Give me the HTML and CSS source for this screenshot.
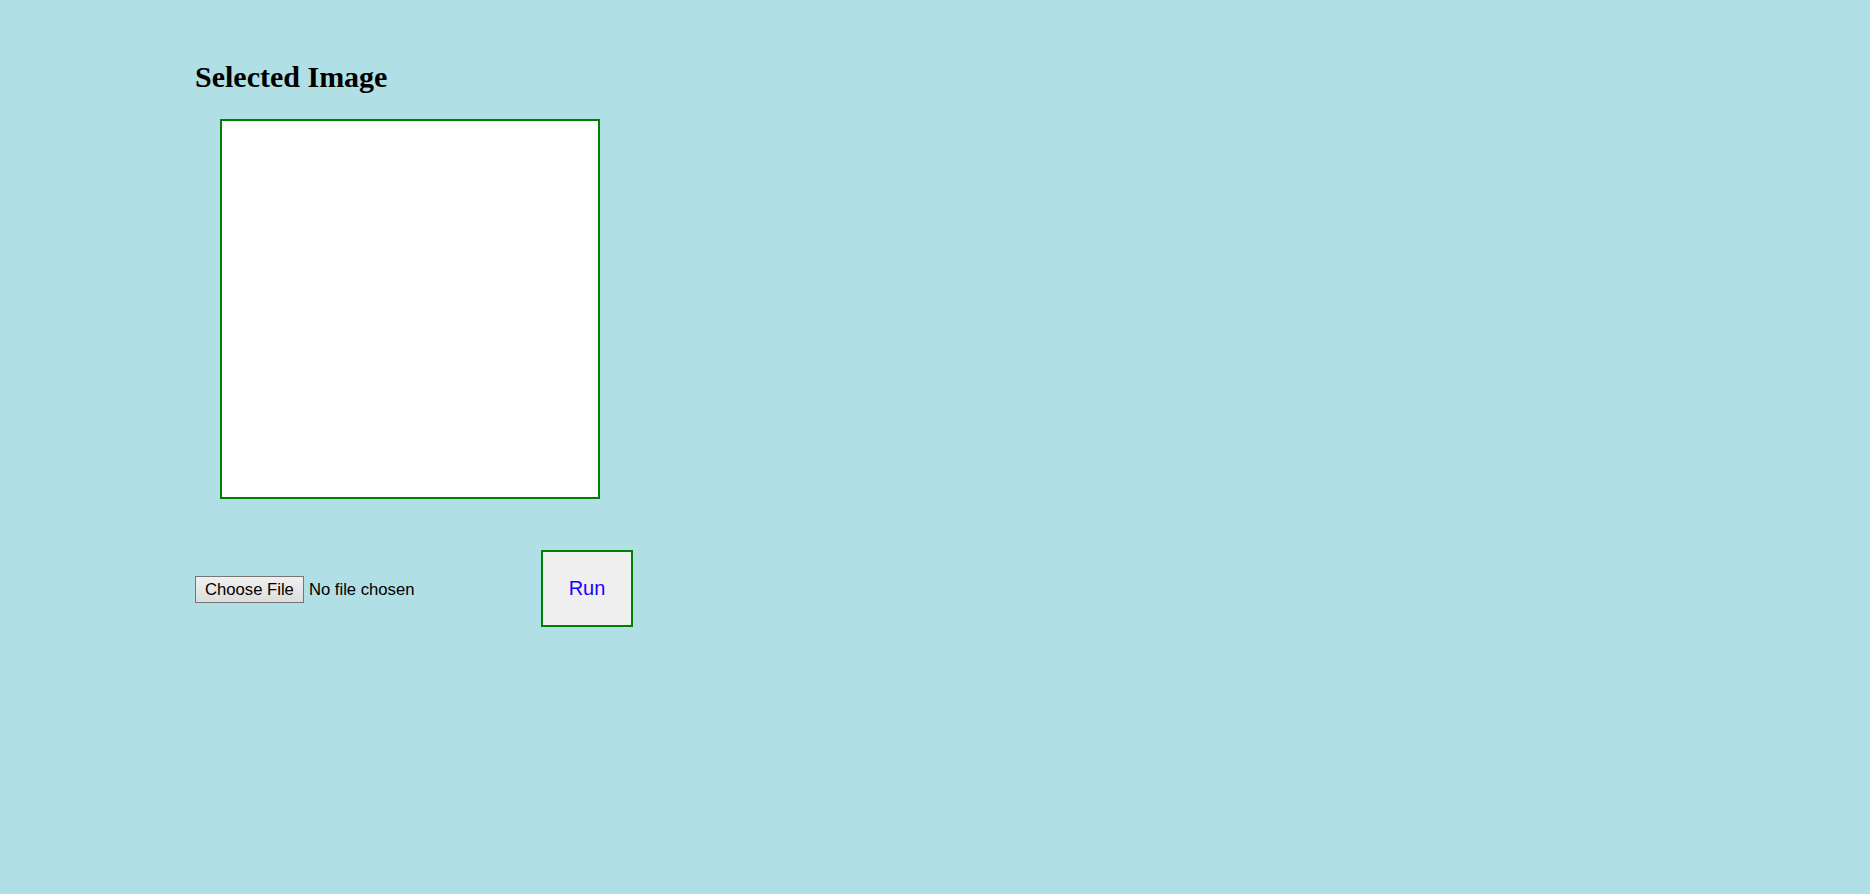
FILE: index.html
```html
<!DOCTYPE html>
<html lang="en">
<head>
<meta charset="utf-8">
<title>Selected Image</title>
<link rel="stylesheet" href="styles.css">
</head>
<body>
  <main class="page">
    <h2 class="title">Selected Image</h2>
    <div class="preview"></div>
    <div class="controls">
      <input class="file-input" type="file" accept="image/*">
      <button class="run-btn" type="button">Run</button>
    </div>
  </main>
</body>
</html>
```

FILE: styles.css
```css
html, body {
  margin: 0;
  padding: 0;
  background: #b0dfe5;
}

body {
  font-family: "Liberation Sans", Arial, sans-serif;
}

.page {
  padding: 60px 0 0 195px;
  display: flex;
  flex-direction: column;
  align-items: flex-start;
}

.title {
  margin: 0;
  font-family: "Liberation Serif", "Times New Roman", serif;
  font-size: 30px;
  font-weight: bold;
  color: #000;
}

.preview {
  margin: 25px 0 0 25px;
  width: 380px;
  height: 380px;
  box-sizing: border-box;
  border: 2px solid #008000;
  background: #ffffff;
}

.controls {
  margin-top: 51px;
  display: flex;
  align-items: center;
}

.file-input {
  width: 346px;
  font-family: "Liberation Sans", Arial, sans-serif;
  font-size: 16.67px;
  color: #000;
  margin: 2px 0 0 0;
  padding: 0;
}

.file-input::file-selector-button {
  font-family: "Liberation Sans", Arial, sans-serif;
  font-size: 16.67px;
  height: 27px;
  padding: 0 9px;
  margin: 0 5px 0 0;
  border: 1px solid #767676;
  border-radius: 0;
  background: linear-gradient(#f0f0f0, #dddddd);
  color: #000;
}

.run-btn {
  width: 92px;
  height: 77px;
  box-sizing: border-box;
  border: 2px solid #008000;
  background: #efefef;
  color: #1a00ff;
  font-family: "Liberation Sans", Arial, sans-serif;
  font-size: 20px;
  padding: 0;
  margin: 0;
}
```
